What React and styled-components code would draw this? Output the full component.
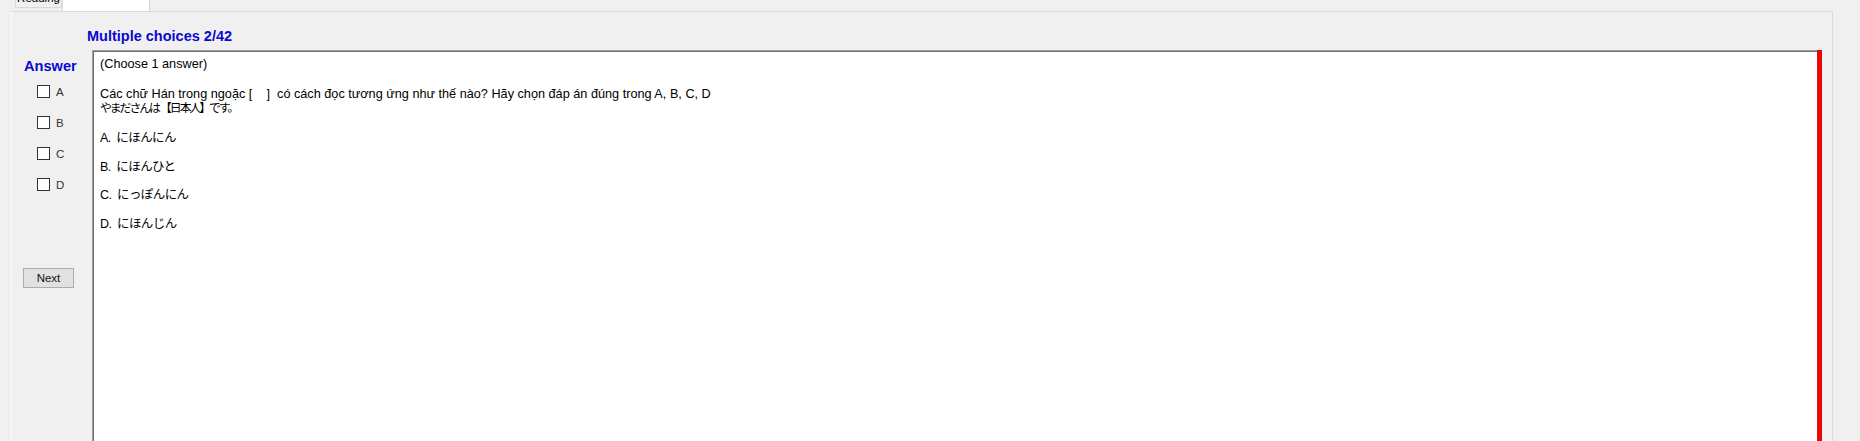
import React from "react";
import styled, { createGlobalStyle } from "styled-components";

const Global = createGlobalStyle`
  html, body {
    margin: 0;
    padding: 0;
    height: 441px;
    overflow: hidden;
    background: #f0f0f0;
    font-family: "Liberation Sans", "Noto Sans CJK JP", sans-serif;
  }
`;

const Page = styled.div`
  width: 1860px;
  height: 441px;
  overflow: hidden;
  background: #f0f0f0;
`;

const TabStrip = styled.div`
  height: 11px;
  display: flex;
  align-items: flex-end;
  padding-left: 15px;
  overflow: hidden;
`;

const Tab = styled.div`
  box-sizing: border-box;
  width: ${(p) => p.$w}px;
  height: ${(p) => (p.$active ? 20 : 17)}px;
  margin-bottom: ${(p) => (p.$active ? 0 : 3)}px;
  background: ${(p) => (p.$active ? "#ffffff" : "#f0f0f0")};
  border: 1px solid #d9d9d9;
  border-bottom: ${(p) => (p.$active ? "none" : "1px solid #d9d9d9")};
  font-size: 11.5px;
  line-height: 12px;
  color: #000;
  display: flex;
  justify-content: center;
  align-items: flex-end;
  padding-bottom: ${(p) => p.$pb}px;
`;

const Panel = styled.div`
  box-sizing: border-box;
  margin-left: 11px;
  width: 1822px;
  height: 440px;
  border: 1px solid #d9d9d9;
  border-left-color: #fbfbfb;
  background: #f0f0f0;
  display: flex;
  flex-direction: column;
`;

const Header = styled.div`
  padding: 16px 0 0 75px;
  height: 16px;
  margin-bottom: 6px;
  font-size: 14.5px;
  line-height: 16px;
  font-weight: bold;
  color: #0a0acf;
`;

const Body = styled.div`
  display: flex;
  flex: 1;
  margin-right: 10px;
`;

const Side = styled.div`
  width: 80px;
  flex: none;
  display: flex;
  flex-direction: column;
`;

const AnswerLabel = styled.div`
  padding: 8px 0 0 12px;
  font-size: 14.6px;
  line-height: 16px;
  font-weight: bold;
  color: #0a0acf;
`;

const ChoiceList = styled.div`
  margin-top: 2px;
  padding-left: 25px;
  display: flex;
  flex-direction: column;
`;

const ChoiceRow = styled.label`
  height: 31px;
  display: flex;
  align-items: center;
  gap: 6px;
  font-size: 11.5px;
  color: #333;
`;

const Box = styled.span`
  box-sizing: border-box;
  width: 13px;
  height: 13px;
  background: #fff;
  border: 1px solid #333;
  display: inline-block;
`;

const NextButton = styled.button`
  box-sizing: border-box;
  margin: 68px 0 0 11px;
  width: 51px;
  height: 20px;
  padding: 0;
  background: #e1e1e1;
  border: 1px solid #adadad;
  font-family: "Liberation Sans", sans-serif;
  font-size: 11.5px;
  color: #111;
`;

const TextArea = styled.div`
  flex: 1;
  box-sizing: border-box;
  height: 420px;
  background: #fff;
  border-right: 5px solid #e80808;
  box-shadow: inset 1px 1px 0 #a0a0a0, inset 2px 2px 0 #6e6e6e;
  padding: 7px 0 0 8px;
  font-size: 12.7px;
  line-height: 14px;
  color: #000;
`;

const Para = styled.div`
  margin-top: ${(p) => p.$gap || 0}px;
  white-space: pre;
`;

const JpLine = styled.div`
  margin-top: ${(p) => p.$gap || 0}px;
  white-space: pre;
  font-family: "Liberation Sans", "Noto Sans CJK JP", sans-serif;
  font-size: ${(p) => p.$size || 12.5}px;
  letter-spacing: ${(p) => p.$ls || 0}px;
`;

const choices = ["A", "B", "C", "D"];
const options = [
  "A.  にほんにん",
  "B.  にほんひと",
  "C.  にっぽんにん",
  "D.  にほんじん",
];

export default function App() {
  return (
    <Page>
      <Global />
      <TabStrip>
        <Tab $w={47} $pb={3}>Reading</Tab>
        <Tab $w={88} $active $pb={14}>Kanji</Tab>
      </TabStrip>
      <Panel>
        <Header>Multiple choices 2/42</Header>
        <Body>
          <Side>
            <AnswerLabel>Answer</AnswerLabel>
            <ChoiceList>
              {choices.map((c) => (
                <ChoiceRow key={c}>
                  <Box />
                  {c}
                </ChoiceRow>
              ))}
            </ChoiceList>
            <NextButton>Next</NextButton>
          </Side>
          <TextArea>
            <Para>(Choose 1 answer)</Para>
            <Para $gap={16}>
              {"Các chữ Hán trong ngoặc [    ]  có cách đọc tương ứng như thế nào? Hãy chọn đáp án đúng trong A, B, C, D"}
            </Para>
            <JpLine $size={11.8} $ls={-2}>やまださんは 【日本人】です。</JpLine>
            {options.map((o, i) => (
              <JpLine key={o} $gap={i === 0 ? 16 : 14.5} $ls={-0.6}>
                {o}
              </JpLine>
            ))}
          </TextArea>
        </Body>
      </Panel>
    </Page>
  );
}
